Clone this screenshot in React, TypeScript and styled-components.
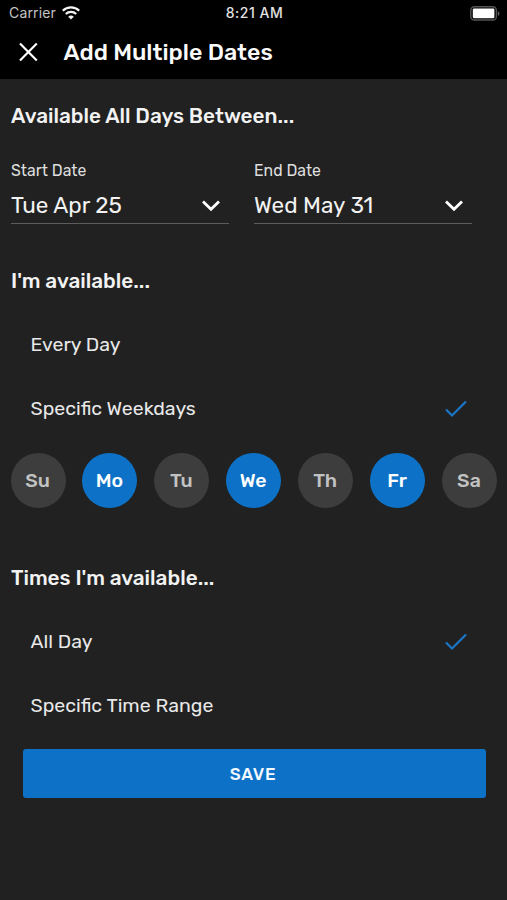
import React from "react";
import styled, { createGlobalStyle } from "styled-components";

const GlobalStyle = createGlobalStyle`
  * { box-sizing: border-box; }
  body {
    margin: 0;
    background: #212121;
    color: #f2f2f2;
    font-family: Rubik, Roboto, sans-serif;
  }
`;

const Screen = styled.div`
  width: 507px;
  height: 900px;
  overflow: hidden;
  background: #212121;
`;

const Top = styled.header`
  height: 79px;
  background: #000;
`;

const StatusBar = styled.div`
  height: 27px;
  display: grid;
  grid-template-columns: 1fr auto 1fr;
  align-items: center;
  padding: 0 7px 1px 9px;
  font-family: Inter, sans-serif;
  font-size: 14px;
  line-height: 26px;
`;

const Carrier = styled.span`
  display: flex;
  align-items: center;
  gap: 6px;
  color: #c4c4c4;
  letter-spacing: 0.15px;
`;

const Clock = styled.span`
  font-size: 14px;
  font-weight: 500;
  letter-spacing: 0.5px;
  color: #e2e2e2;
`;

const BatterySlot = styled.span`
  display: flex;
  justify-content: flex-end;
`;

const TitleBar = styled.div`
  height: 52px;
  display: flex;
  align-items: center;
  padding: 0 0 2px 18px;
  gap: 24.5px;
`;

const CloseButton = styled.button`
  display: flex;
  padding: 0;
  border: 0;
  background: none;
  color: #fff;
`;

const Title = styled.h1`
  margin: 0;
  font-size: 23.2px;
  font-weight: 500;
  line-height: 28px;
  color: #fafafa;
`;

const Section = styled.section<{ $height: number; $padTop?: number }>`
  height: ${(p) => p.$height}px;
  padding-top: ${(p) => p.$padTop ?? 0}px;
`;

const Heading = styled.h2`
  margin: 0;
  padding-left: 11px;
  font-size: 20.75px;
  font-weight: 500;
  line-height: 26px;
`;

const Dates = styled.div`
  display: grid;
  grid-template-columns: 218px 218px;
  gap: 25px;
  padding: 31px 0 0 11px;
`;

const Field = styled.div`
  display: flex;
  flex-direction: column;
  height: 64px;
  border-bottom: 1px solid #5c5c5c;
`;

const FieldLabel = styled.span`
  font-size: 15.8px;
  line-height: 22px;
  color: #dedede;
`;

const FieldValue = styled.span`
  flex: 1;
  display: flex;
  align-items: center;
  justify-content: space-between;
  padding: 6px 9px 0 0;
  font-size: 22.5px;
  line-height: 28px;
`;

const Options = styled.div`
  padding-top: 19px;
`;

const Option = styled.div`
  height: 64px;
  display: flex;
  align-items: center;
  justify-content: space-between;
  padding: 0 40px 2px 30.5px;
  font-size: 19.5px;
  color: #e8e8e8;

  svg {
    margin-top: 2px;
  }
`;

const Weekdays = styled.div`
  display: flex;
  justify-content: space-between;
  padding: 12px 10px 0 10.5px;
`;

const Day = styled.button<{ $on: boolean }>`
  width: 55px;
  height: 55px;
  padding: 0 1px 0 0;
  border: 0;
  border-radius: 50%;
  background: ${(p) => (p.$on ? "#0d72c7" : "#3d3d3d")};
  color: ${(p) => (p.$on ? "#fff" : "#c2c2c2")};
  font: 500 19.5px Rubik, Roboto, sans-serif;
`;

const Save = styled.button`
  display: block;
  width: 463px;
  height: 49px;
  margin: 11px 0 0 23px;
  padding: 0 3px 0 0;
  border: 0;
  border-radius: 3px;
  background: #0d72c7;
  color: #f4faff;
  font: 500 17px Rubik, Roboto, sans-serif;
  letter-spacing: 0.7px;
`;

const Chevron = () => (
  <svg width="18" height="12" viewBox="0 0 18 12" fill="none" stroke="#fff" strokeWidth="2.8">
    <path d="M1 1.5 9 9.2 17 1.5" />
  </svg>
);

const Check = () => (
  <svg width="22" height="18" viewBox="0 0 22 18" fill="none" stroke="#1976c5" strokeWidth="2.2">
    <path d="M1 9.5 7 15.5 21 1.5" />
  </svg>
);

const Wifi = () => (
  <svg width="18" height="14" viewBox="0 0 18 14" fill="none" stroke="#f2f2f2" strokeWidth="2.3">
    <path d="M.8 4.8a11.7 11.7 0 0 1 16.4 0" />
    <path d="M3.8 8a7.4 7.4 0 0 1 10.4 0" />
    <path d="M9 13.6 6.2 10.8a4 4 0 0 1 5.6 0Z" fill="#f2f2f2" stroke="none" />
  </svg>
);

const Battery = () => (
  <svg width="30" height="15" viewBox="0 0 30 15">
    <rect x="0.8" y="0.8" width="25.6" height="13.2" rx="3.6" fill="#000" stroke="#555" strokeWidth="1.4" />
    <rect x="2.8" y="2.6" width="21.6" height="9.6" rx="1.2" fill="#fff" />
    <path d="M27.9 5.2c2 .8 2 3.8 0 4.6Z" fill="#666" />
  </svg>
);

const Close = () => (
  <svg width="21" height="20" viewBox="0 0 21 20" fill="none" stroke="#fff" strokeWidth="2.2">
    <path d="M2 1.5 18.8 18.5M18.8 1.5 2 18.5" />
  </svg>
);

const days = [
  { name: "Su", on: false },
  { name: "Mo", on: true },
  { name: "Tu", on: false },
  { name: "We", on: true },
  { name: "Th", on: false },
  { name: "Fr", on: true },
  { name: "Sa", on: false },
];

export default function App() {
  return (
    <Screen>
      <GlobalStyle />
      <Top>
        <StatusBar>
          <Carrier>Carrier <Wifi /></Carrier>
          <Clock>8:21 AM</Clock>
          <BatterySlot><Battery /></BatterySlot>
        </StatusBar>
        <TitleBar>
          <CloseButton aria-label="Close"><Close /></CloseButton>
          <Title>Add Multiple Dates</Title>
        </TitleBar>
      </Top>
      <Section $height={189} $padTop={24}>
        <Heading>Available All Days Between...</Heading>
        <Dates>
          <Field>
            <FieldLabel>Start Date</FieldLabel>
            <FieldValue>Tue Apr 25 <Chevron /></FieldValue>
          </Field>
          <Field>
            <FieldLabel>End Date</FieldLabel>
            <FieldValue>Wed May 31 <Chevron /></FieldValue>
          </Field>
        </Dates>
      </Section>
      <Section $height={297}>
        <Heading>I'm available...</Heading>
        <Options>
          <Option>Every Day</Option>
          <Option>Specific Weekdays <Check /></Option>
        </Options>
        <Weekdays>
          {days.map((d) => <Day key={d.name} $on={d.on}>{d.name}</Day>)}
        </Weekdays>
      </Section>
      <Section $height={300}>
        <Heading>Times I'm available...</Heading>
        <Options>
          <Option>All Day <Check /></Option>
          <Option>Specific Time Range</Option>
        </Options>
        <Save>SAVE</Save>
      </Section>
    </Screen>
  );
}
